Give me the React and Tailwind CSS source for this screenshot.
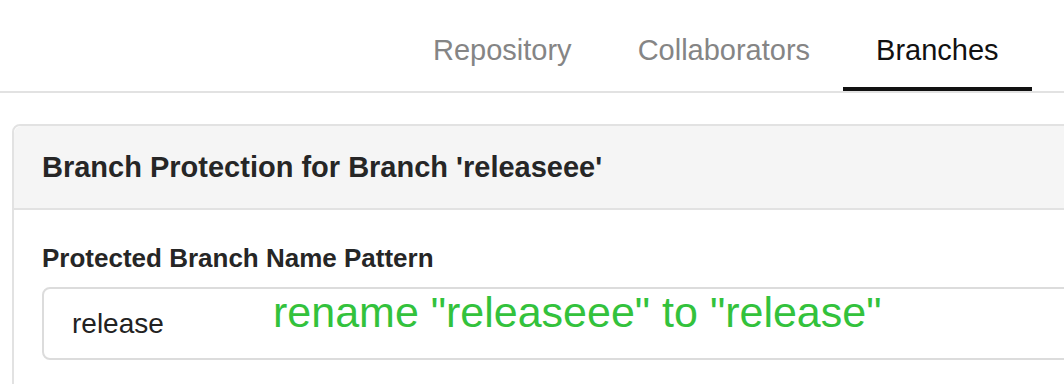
export default function App() {
  const font = { fontFamily: '"Liberation Sans", Arial, sans-serif' };
  return (
    <div
      className="relative w-[1064px] h-[384px] overflow-hidden bg-white font-['Liberation_Sans',Arial,sans-serif]"
      style={font}
    >
      {/* Tabs */}
      <div className="flex h-[93px] border-b-2 border-[#e2e2e2] pl-[400px] whitespace-nowrap">
        <div className="h-[91px] px-[33px] pt-[34px] text-[29px] leading-[32px] text-[#858585] border-b-4 border-transparent">
          Repository
        </div>
        <div className="h-[91px] px-[33px] pt-[34px] text-[29px] leading-[32px] text-[#858585] border-b-4 border-transparent">
          Collaborators
        </div>
        <div className="h-[91px] px-[33px] pt-[34px] text-[29px] leading-[32px] text-[#111111] border-b-4 border-[#111111]">
          Branches
        </div>
        <div className="h-[91px] px-[33px] pt-[34px] text-[29px] leading-[32px] text-[#858585] border-b-4 border-transparent">
          Tags
        </div>
      </div>

      {/* Card */}
      <div className="ml-[12px] mt-[31px] w-[1100px] rounded-lg border-2 border-[#e2e2e2]">
        <div className="bg-[#f5f5f5] rounded-t-lg border-b-2 border-[#e2e2e2] px-[28px] py-[24px]">
          <div className="text-[29px] leading-[34px] font-bold text-[#262626] whitespace-nowrap">
            Branch Protection for Branch 'releaseee'
          </div>
        </div>
        <div className="px-[28px] pt-[33px] pb-[40px]">
          <div className="text-[26px] leading-[30px] font-bold text-[#262626] whitespace-nowrap">
            Protected Branch Name Pattern
          </div>
          <div className="mt-[14px] h-[73px] rounded-lg border-2 border-[#dcdcdc] flex items-center px-[28px]">
            <span className="text-[28px] leading-[32px] text-[#222222]">release</span>
          </div>
        </div>
      </div>

      {/* Annotation */}
      <div className="absolute left-[273px] top-[288px] text-[43px] leading-[48px] text-[#33c23c] whitespace-nowrap">
        rename "releaseee" to "release"
      </div>
    </div>
  );
}
